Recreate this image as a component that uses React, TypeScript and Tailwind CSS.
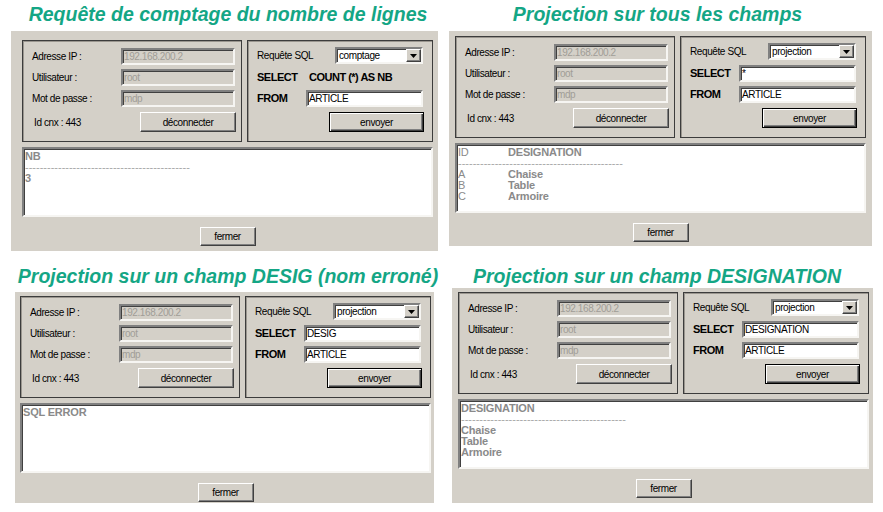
import React from 'react';

const win = "font-['Liberation_Sans',Arial,sans-serif] text-[10px] tracking-[-0.4px]";
const sunken = "border-2 border-t-[#808080] border-l-[#808080] border-r-[#f6f5f2] border-b-[#f6f5f2] shadow-[inset_1px_1px_0_#404040]";
const raised = "border border-t-white border-l-white border-r-[#404040] border-b-[#404040] shadow-[inset_-1px_-1px_0_#808080] bg-[#d4d0c8]";
const groupBox = "border border-[#3c3c3c] shadow-[inset_1px_1px_0_#9a968f]";
const dashes = '---------------------------------------------';

interface PanelProps {
  title: string;
  titleClass: string;
  boxClass: string;
  mode: string;
  select: React.ReactNode;
  output: React.ReactNode;
}

function Field({ value, disabled }: { value: string; disabled?: boolean }) {
  return (
    <div className={`${sunken} h-[17px] flex items-center pl-[1px] leading-none ${disabled ? 'bg-[#d4d0c8] text-[#a09d97]' : 'bg-white text-black'}`}>
      {value}
    </div>
  );
}

function Panel({ title, titleClass, boxClass, mode, select, output }: PanelProps) {
  return (
    <div className="flex flex-col">
      {/* Title */}
      <div className={`${titleClass} font-['Liberation_Sans',Arial,sans-serif] font-bold italic text-[19.5px] leading-6 text-center text-[#14a685] whitespace-nowrap`}>
        {title}
      </div>

      <div className={`${boxClass} bg-[#d4d0c8] ${win}`}>
        <div className="flex gap-[5px]">
          {/* Connection */}
          <div className={`${groupBox} w-[220px] h-[102px] pl-[9px] pt-[7px]`}>
            <div className="flex items-center h-[17px]">
              <span className="w-[89px]">Adresse IP :</span>
              <div className="w-[114px]"><Field value="192.168.200.2" disabled /></div>
            </div>
            <div className="flex items-center h-[17px] mt-[4px]">
              <span className="w-[89px]">Utilisateur :</span>
              <div className="w-[114px]"><Field value="root" disabled /></div>
            </div>
            <div className="flex items-center h-[17px] mt-[4px]">
              <span className="w-[89px]">Mot de passe :</span>
              <div className="w-[114px]"><Field value="mdp" disabled /></div>
            </div>
            <div className="flex items-center h-[20px] mt-[5px]">
              <span className="w-[108px] pl-[2px]">Id cnx : 443</span>
              <button className={`${raised} w-[96px] h-[20px] flex items-center justify-center`}>déconnecter</button>
            </div>
          </div>

          {/* Query */}
          <div className={`${groupBox} w-[186px] h-[102px] pl-[9px] pt-[6px]`}>
            <div className="flex items-center h-[17px]">
              <span className="w-[78px]">Requête SQL</span>
              <div className={`${sunken} w-[88px] h-[17px] bg-white flex items-center`}>
                <span className="flex-1 pl-[2px] leading-none">{mode}</span>
                <div className={`${raised} w-[15px] h-[13px] flex items-center justify-center`}>
                  <svg width="7" height="4" viewBox="0 0 7 4"><path d="M0 0h7L3.5 4z" fill="#000" /></svg>
                </div>
              </div>
            </div>
            <div className="flex items-center h-[17px] mt-[5px]">
              <span className="w-[49px] font-bold text-[11px] tracking-[-0.5px]">SELECT</span>
              <div className="w-[117px]">{select}</div>
            </div>
            <div className="flex items-center h-[17px] mt-[4px]">
              <span className="w-[49px] font-bold text-[11px] tracking-[-0.5px]">FROM</span>
              <div className="w-[117px]"><Field value="ARTICLE" /></div>
            </div>
            <div className="flex h-[20px] mt-[5px] pl-[72px]">
              <button className="w-[95px] h-[20px] border border-black bg-[#d4d0c8] shadow-[inset_1px_1px_0_#fff,inset_-1px_-1px_0_#404040,inset_-2px_-2px_0_#808080] flex items-center justify-center">
                envoyer
              </button>
            </div>
          </div>
        </div>

        {/* Result */}
        <div className={`${sunken} mt-[5px] w-[411px] h-[70px] bg-white pl-[1px] pt-[2px] text-[#8a8a8a] leading-[11px]`}>
          {output}
        </div>

        <div className="w-[411px] flex justify-center mt-[10px]">
          <button className={`${raised} w-[56px] h-[19px] flex items-center justify-center`}>fermer</button>
        </div>
      </div>
    </div>
  );
}

const b = "font-bold text-[11px] tracking-[-0.2px] leading-[11px]";
const dash = "text-[11px] tracking-normal leading-[11px] text-[#a6a6a6] whitespace-nowrap";

export default function App() {
  return (
    <div className="w-[883px] h-[512px] bg-white grid grid-cols-[440px_443px] grid-rows-[262px_250px] overflow-hidden">
      <Panel
        title="Requête de comptage du nombre de lignes"
        titleClass="h-[31px] pt-[2px] pl-[16px]"
        boxClass="ml-[11px] w-[427px] h-[220px] pl-[11px] pt-[9px]"
        mode="comptage"
        select={<span className="block pl-[3px] font-bold text-[11px] tracking-[-0.5px] whitespace-nowrap">COUNT (*) AS NB</span>}
        output={
          <div>
            <div className={b}>NB</div>
            <div className={dash}>{dashes}</div>
            <div className={b}>3</div>
          </div>
        }
      />
      <Panel
        title="Projection sur tous les champs"
        titleClass="h-[31px] pt-[2px] pr-[8px]"
        boxClass="ml-[9px] w-[423px] h-[215px] pl-[6px] pt-[5px]"
        mode="projection"
        select={<Field value="*" />}
        output={
          <div>
            <div className="flex"><span className="w-[50px] text-[11px] leading-[11px]">ID</span><span className={b}>DESIGNATION</span></div>
            <div className={dash}>{dashes}</div>
            <div className="flex"><span className="w-[50px] text-[11px] leading-[11px]">A</span><span className={b}>Chaise</span></div>
            <div className="flex"><span className="w-[50px] text-[11px] leading-[11px]">B</span><span className={b}>Table</span></div>
            <div className="flex"><span className="w-[50px] text-[11px] leading-[11px]">C</span><span className={b}>Armoire</span></div>
          </div>
        }
      />
      <Panel
        title="Projection sur un champ DESIG (nom erroné)"
        titleClass="h-[30px] pt-[2px] pl-[16px]"
        boxClass="ml-[15px] w-[419px] h-[211px] pl-[5px] pt-[4px]"
        mode="projection"
        select={<Field value="DESIG" />}
        output={<div className={b}>SQL ERROR</div>}
      />
      <Panel
        title="Projection sur un champ DESIGNATION"
        titleClass="h-[26px] pt-[2px] pr-[9px]"
        boxClass="ml-[12px] w-[421px] h-[215px] pl-[6px] pt-[4px]"
        mode="projection"
        select={<Field value="DESIGNATION" />}
        output={
          <div>
            <div className={b}>DESIGNATION</div>
            <div className={dash}>{dashes}</div>
            <div className={b}>Chaise</div>
            <div className={b}>Table</div>
            <div className={b}>Armoire</div>
          </div>
        }
      />
    </div>
  );
}
